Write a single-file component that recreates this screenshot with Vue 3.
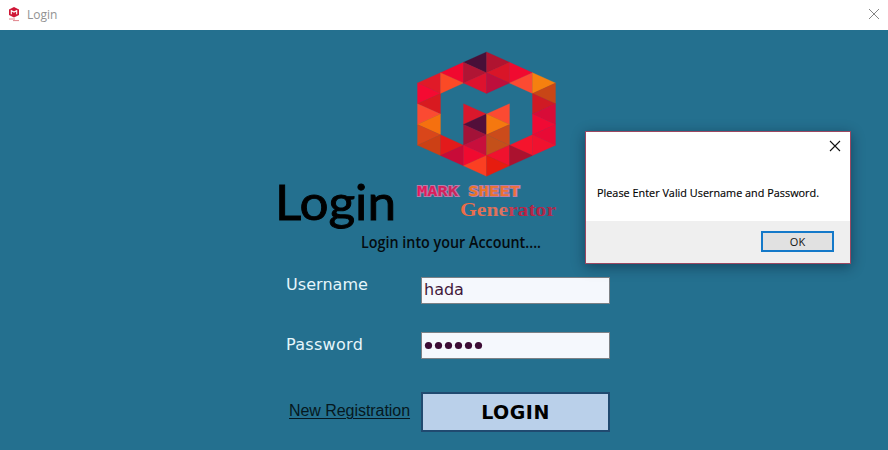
<script setup>
import { ref } from 'vue'

const username = ref('hada')
const password = ref('secret')

// Each entry is [strip, centre row, colour] on a triangular lattice.
const cells = [
  [0, 3, '#e01a28'], [0, 4, '#f50a32'], [0, 5, '#d81a20'], [0, 6, '#fb4a32'],
  [0, 7, '#f5700f'], [0, 8, '#d9461a'], [0, 9, '#cc4015'],
  [1, 2, '#f0082f'], [1, 3, '#fb4a26'], [1, 9, '#e31a1b'], [1, 10, '#c80b38'],
  [2, 1, '#471038'], [2, 2, '#b01534'], [2, 3, '#dd122e'],
  [2, 6, '#d9182c'], [2, 7, '#520f3a'], [2, 8, '#a31238'], [2, 9, '#c80f3c'],
  [2, 10, '#f00a30'], [2, 11, '#fb3f22'],
  [3, 1, '#b01430'], [3, 2, '#d91528'], [3, 3, '#bd0f3c'],
  [3, 6, '#fb4a32'], [3, 7, '#f5780f'], [3, 8, '#cb4b1b'], [3, 9, '#c4501a'],
  [3, 10, '#f0122e'], [3, 11, '#e61c0f'],
  [4, 2, '#f00a30'], [4, 3, '#fb4a32'], [4, 9, '#f5142c'], [4, 10, '#ab122f'],
  [5, 3, '#f5800f'], [5, 4, '#c84616'], [5, 5, '#d01a24'], [5, 6, '#d80c38'],
  [5, 7, '#f00a34'], [5, 8, '#e80a35'], [5, 9, '#f0122f'],
]

const triangles = cells.map(([c, r, fill]) => {
  const apexLeft = (c + r) % 2 === 1
  const apex = apexLeft ? c : c + 1
  const edge = apexLeft ? c + 1 : c
  const pt = (x, y) => `${x * 23},${y * 10.35}`
  return { fill, points: [pt(apex, r), pt(edge, r - 1), pt(edge, r + 1)].join(' ') }
})
</script>

<template>
  <div class="window">
    <header class="titlebar">
      <svg class="app-icon" width="14" height="16" viewBox="0 0 14 16">
        <path d="M7 1 L12 3.5 V9 L7 11.5 L2 9 V3.5 Z" fill="#cf1736" />
        <path d="M4.3 8.3 V4.7 L7 6.1 L9.7 4.7 V8.3" fill="none" stroke="#fff" stroke-width="1.1" />
        <path d="M2 13 H8 M6 14.6 H12" stroke="#e0848c" stroke-width="1" />
      </svg>
      <span class="caption">Login</span>
      <svg class="close" width="12" height="12" viewBox="0 0 12 12">
        <path d="M1 1 L11 11 M11 1 L1 11" stroke="#858585" stroke-width="1" />
      </svg>
    </header>

    <main class="body">
      <section class="hero">
        <svg class="title" width="135" height="64" viewBox="0 0 135 64">
          <text x="5" y="49" textLength="121" lengthAdjust="spacingAndGlyphs">Login</text>
        </svg>
        <svg class="logo" width="152" height="180" viewBox="0 0 152 180">
          <defs>
            <linearGradient id="mark" x1="0" x2="1">
              <stop offset="0" stop-color="#e8175a" />
              <stop offset="0.45" stop-color="#c32a5c" />
              <stop offset="0.5" stop-color="#e9761f" />
              <stop offset="1" stop-color="#ee6f3c" />
            </linearGradient>
            <linearGradient id="gen" x1="0" x2="1">
              <stop offset="0" stop-color="#ed6b45" />
              <stop offset="0.45" stop-color="#dc7462" />
              <stop offset="0.58" stop-color="#bd2344" />
              <stop offset="1" stop-color="#ad294b" />
            </linearGradient>
          </defs>
          <g transform="translate(7.5 7)">
            <polygon v-for="(t, i) in triangles" :key="i" :points="t.points" :fill="t.fill" :stroke="t.fill" stroke-width="0.3" />
          </g>
          <text class="mark" x="7" y="151" textLength="103" lengthAdjust="spacingAndGlyphs">MARK SHEET</text>
          <text class="generator" x="50" y="171" textLength="96" lengthAdjust="spacingAndGlyphs">Generator</text>
        </svg>
      </section>

      <svg class="subtitle" width="190" height="30" viewBox="0 0 190 30">
        <text x="6" y="18" textLength="180" lengthAdjust="spacingAndGlyphs">Login into your Account....</text>
      </svg>

      <form class="form" @submit.prevent>
        <label class="label" for="user">Username</label>
        <input id="user" v-model="username" class="field" type="text" />
        <label class="label lower" for="pass">Password</label>
        <div class="field secret">
          <svg width="62" height="10" viewBox="0 0 62 10">
            <circle v-for="(ch, i) in password" :key="i" :cx="5.5 + i * 10" cy="4.5" r="3.6" fill="#3d0c35" />
          </svg>
        </div>
        <a class="register">New Registration</a>
        <button class="login" type="submit">LOGIN</button>
      </form>
    </main>

    <div class="dialog" role="dialog">
      <div class="dialog-content">
        <svg class="dialog-close" width="12" height="12" viewBox="0 0 12 12">
          <path d="M1 1 L11 11 M11 1 L1 11" stroke="#111" stroke-width="1.1" />
        </svg>
        <svg class="message" width="240" height="20" viewBox="0 0 240 20">
          <text x="1" y="14" textLength="222" lengthAdjust="spacingAndGlyphs">Please Enter Valid Username and Password.</text>
        </svg>
      </div>
      <div class="dialog-actions">
        <button class="ok" type="button">OK</button>
      </div>
    </div>
  </div>
</template>

<style>
body {
  margin: 0;
}
</style>

<style scoped>
.window {
  position: relative;
  width: 888px;
  height: 450px;
  overflow: hidden;
  background: #24708f;
}
svg {
  overflow: visible;
}
.titlebar {
  display: flex;
  align-items: center;
  box-sizing: border-box;
  height: 30px;
  padding: 0 8px 2px 7px;
  background: #fff;
}
.caption {
  flex: 1;
  margin-left: 6px;
  padding-top: 1px;
  font: 12px "Open Sans", "Noto Sans", sans-serif;
  color: #929292;
}
.body {
  display: flex;
  flex-direction: column;
}
.hero {
  display: flex;
  align-items: flex-end;
  gap: 5px;
  height: 180px;
  padding: 15px 0 0 270px;
}
.title {
  margin-bottom: -10px;
}
.title text {
  font: 400 48px Lato, sans-serif;
  stroke: #000;
  stroke-width: 0.9;
}
.mark {
  font: bold 14.5px "DejaVu Sans Mono", monospace;
  fill: url(#mark);
  stroke: #b37fab;
  stroke-width: 1.8;
  paint-order: stroke;
}
.generator {
  font: bold 18px "Liberation Serif", serif;
  fill: url(#gen);
}
.subtitle {
  margin: 5px 0 0 355px;
}
.subtitle text {
  font: 600 16.5px "Open Sans", sans-serif;
  fill: #040c10;
}
.form {
  display: grid;
  grid-template-columns: 135px 189px;
  grid-template-rows: 27px 27px 40px;
  row-gap: 28px;
  padding: 17px 0 0 286px;
}
.label {
  margin-top: -2px;
  font: 16px/20px "DejaVu Sans", sans-serif;
  letter-spacing: 0.05px;
  color: #e6f6fb;
}
.lower {
  margin-top: 3px;
  letter-spacing: 0.3px;
}
.field {
  box-sizing: border-box;
  width: 189px;
  height: 27px;
  margin: 0;
  padding: 0 2px 3px;
  border: 1px solid #7c8186;
  border-radius: 0;
  background: #f5f8fd;
  color: #42183b;
  font: 16px "DejaVu Sans", sans-serif;
}
.secret {
  display: flex;
  align-items: center;
  padding: 0 1px;
}
.register {
  align-self: start;
  margin: 14px 0 0 3px;
  font: 16px/19px "Liberation Sans", sans-serif;
  letter-spacing: -0.05px;
  color: #061820;
  text-decoration: underline;
  text-decoration-thickness: 1px;
  text-underline-offset: 2px;
}
.login {
  margin: 5px 0 0;
  padding: 0;
  height: 40px;
  border: 2px solid #204a70;
  background: #bad0ea;
  color: #000;
  font: bold 19px "DejaVu Sans", sans-serif;
  letter-spacing: 0.5px;
}
.dialog {
  position: absolute;
  left: 585px;
  top: 131px;
  box-sizing: border-box;
  width: 266px;
  height: 133px;
  border: 1px solid #9b4861;
  background: #fff;
  box-shadow: 0 3px 12px rgba(0, 20, 40, 0.45);
}
.dialog-content {
  display: flex;
  flex-direction: column;
  justify-content: space-between;
  box-sizing: border-box;
  height: 89px;
  padding: 8px 9px 18px 10px;
}
.dialog-close {
  align-self: flex-end;
}
.message text {
  font: 11.5px "Open Sans", "Noto Sans", sans-serif;
  fill: #000;
  stroke: #000;
  stroke-width: 0.15;
}
.dialog-actions {
  display: flex;
  justify-content: flex-end;
  box-sizing: border-box;
  height: 42px;
  padding: 10px 16px 0 0;
  background: #efefef;
}
.ok {
  width: 73px;
  height: 21px;
  padding: 0;
  border: 2px solid #1479c9;
  background: #e1e1e1;
  color: #111;
  font: 11px/16px "Open Sans", "Noto Sans", sans-serif;
}
</style>
